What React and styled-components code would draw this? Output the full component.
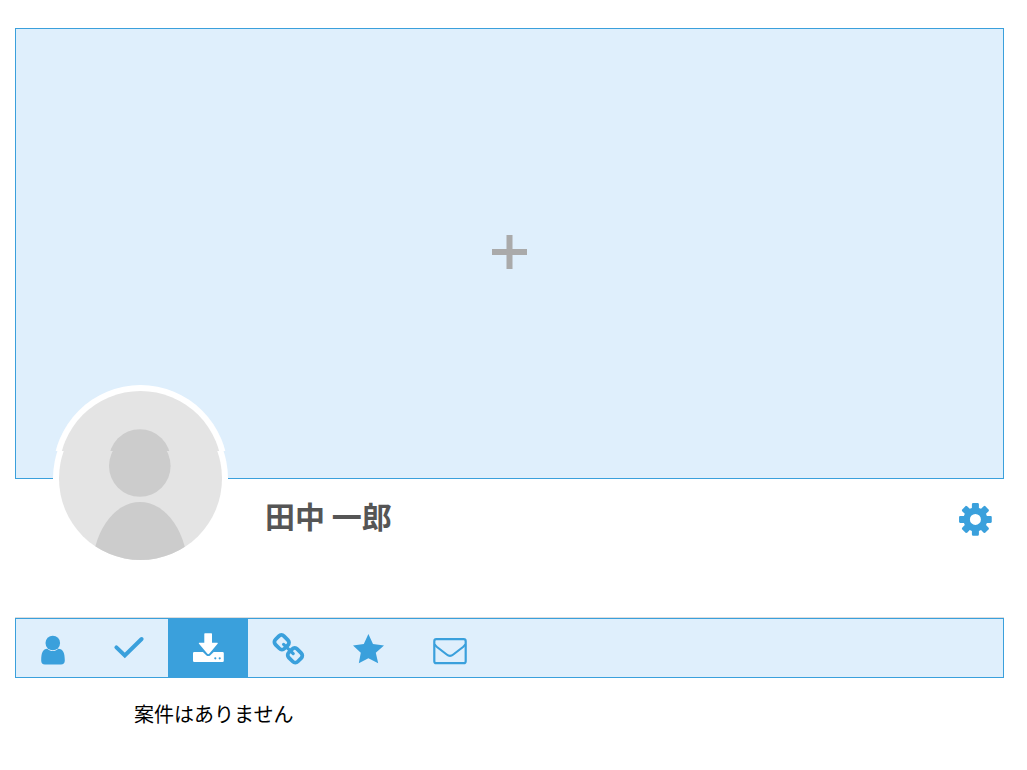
import React, { useState } from "react";
import styled, { createGlobalStyle } from "styled-components";

const BLUE = "#3aa0dc";
const PALE = "#dfeffc";

const GlobalStyle = createGlobalStyle`
  *, *::before, *::after { box-sizing: border-box; }
  body {
    margin: 0;
    background: #fff;
    color: #000;
    font-family: "Noto Sans CJK JP", sans-serif;
  }
`;

const Page = styled.main`
  padding: 28px 23px 32px 15px;
`;

const Cover = styled.button`
  display: flex;
  align-items: center;
  justify-content: center;
  width: 100%;
  height: 451px;
  padding: 0 0 4px;
  border: 1px solid ${BLUE};
  border-radius: 0;
  background: ${PALE};
  color: #aaa;
  cursor: pointer;
`;

const Profile = styled.header`
  display: flex;
  align-items: flex-start;
  height: 139px;
  padding: 0 11px 0 38px;
`;

const Avatar = styled.svg`
  position: relative;
  flex: none;
  display: block;
  margin-top: -94px;
`;

const Name = styled.h1`
  flex: 1;
  margin: 14px 0 0 37px;
  color: #555;
  font-size: 30px;
  line-height: 44px;
  font-weight: 700;
`;

const IconButton = styled.button`
  display: block;
  margin-top: 22px;
  padding: 0;
  border: 0;
  background: none;
  color: ${BLUE};
  cursor: pointer;
`;

const Tabs = styled.nav`
  display: flex;
  height: 60px;
  border: 1px solid ${BLUE};
  background: ${PALE};
  box-shadow: 0 -1px 0 #ddd;
`;

const Tab = styled.button`
  display: flex;
  align-items: center;
  justify-content: center;
  width: ${(p) => (p.$first ? 72 : 80)}px;
  padding: 0;
  border: 0;
  background: ${(p) => (p.$active ? BLUE : "transparent")};
  color: ${(p) => (p.$active ? "#fff" : BLUE)};
  cursor: pointer;
`;

const Message = styled.p`
  margin: 21px 0 0 119px;
  font-size: 20px;
  line-height: 30px;
`;

const Glyph = ({ size = 40, children }) => (
  <svg width={size} height={size} viewBox={`0 0 ${size} ${size}`} fill="currentColor" aria-hidden="true">
    {children}
  </svg>
);

const Portrait = () => (
  <>
    <circle cx="87.5" cy="93.5" r="87.5" fill="#fff" />
    <circle cx="87.5" cy="93.5" r="81.5" fill="#e4e4e4" />
    <circle cx="86.8" cy="81" r="30.8" fill="#cccccc" />
    <ellipse cx="87" cy="187" rx="48" ry="70" fill="#cccccc" clipPath="url(#face)" />
  </>
);

const gearPath = (() => {
  const points = [];
  for (let i = 0; i < 8; i += 1) {
    [[-17, 12], [-13, 15.6], [-10, 16.6], [10, 16.6], [13, 15.6], [17, 12]].forEach(([offset, r]) => {
      const a = ((i * 45 + offset - 90) * Math.PI) / 180;
      points.push(`${(18.4 + r * Math.cos(a)).toFixed(2)} ${(18.4 + r * Math.sin(a)).toFixed(2)}`);
    });
  }
  return `M${points.join("L")}Z M23.9 18.4a5.5 5.5 0 1 0 -11 0a5.5 5.5 0 1 0 11 0Z`;
})();

const TABS = [
  {
    label: "プロフィール",
    icon: (
      <>
        <circle cx="20.8" cy="15" r="7.3" />
        <path d="M15.3 20.7C17 22.3 18.8 23.1 20.8 23.1S24.6 22.3 26.3 20.7C31 20.9 32.8 24.5 32.8 32.5C32.8 35.4 31.4 36.5 29 36.5H13C10.4 36.5 9.2 35.4 9.2 32.5C9.2 24.5 11 20.9 15.3 20.7Z" />
      </>
    ),
  },
  {
    label: "完了",
    icon: <path d="M8.4 19.4L16.8 27.5L33.6 11" fill="none" stroke="currentColor" strokeWidth="4" strokeLinecap="round" />,
  },
  {
    label: "受信",
    icon: (
      <>
        <path d="M16.9 5.3H23.4Q24 5.3 24 5.9V14.7H29.3Q30.3 14.9 29.6 15.8L21.2 25.8Q20.3 26.7 19.4 25.8L11 15.8Q10.3 14.9 11.3 14.7H16.3V5.9Q16.3 5.3 16.9 5.3Z" />
        <path fillRule="evenodd" d="M6.2 24H14.9L18.5 27.4Q20.3 28.8 22.1 27.4L25.7 24H34.5Q35.8 24 35.8 25.3V32.7Q35.8 34 34.5 34H6.2Q5 34 5 32.7V25.3Q5 24 6.2 24ZM26.2 30.3a1.1 1.1 0 1 0 2.2 0a1.1 1.1 0 1 0-2.2 0ZM30.6 30.3a1.1 1.1 0 1 0 2.2 0a1.1 1.1 0 1 0-2.2 0Z" />
      </>
    ),
  },
  {
    label: "リンク",
    icon: (
      <g fill="none" stroke="currentColor" strokeWidth="3.8">
        <rect x="7.3" y="8.3" width="12.8" height="12" rx="3.6" transform="rotate(45 13.7 14.3)" />
        <rect x="20.6" y="21.3" width="12.8" height="12" rx="3.6" transform="rotate(45 27 27.3)" />
        <path d="M15.6 16.4L25.2 25.6" strokeWidth="3.2" strokeLinecap="round" />
      </g>
    ),
  },
  {
    label: "お気に入り",
    icon: <path d="M20.4 6L25 16L36 17.5L27.8 24.8L30.2 35.3L20.4 30.2L10.8 35.3L12.8 24.8L5 17.5L15.8 16Z" />,
  },
  {
    label: "メッセージ",
    icon: (
      <g fill="none" stroke="currentColor" strokeWidth="2.2">
        <rect x="6.3" y="11.2" width="31.4" height="24" rx="2" />
        <path d="M6.6 16.4Q7.4 17.6 9 19L18.7 26.5Q22 29.2 25.3 26.5L35 19Q36.6 17.6 37.4 16.4" />
      </g>
    ),
  },
];

export default function App() {
  const [active, setActive] = useState(2);
  return (
    <>
      <GlobalStyle />
      <Page>
        <Cover type="button" aria-label="カバー画像を追加">
          <svg width="35" height="34" viewBox="0 0 35 34" fill="currentColor" aria-hidden="true">
            <path d="M14.5 0H20.5V14H35V20H20.5V34H14.5V20H0V14H14.5Z" />
          </svg>
        </Cover>
        <Profile>
          <Avatar width="175" height="181" viewBox="0 0 175 181" role="img" aria-label="田中 一郎">
            <defs>
              <clipPath id="upper"><rect width="175" height="66" /></clipPath>
              <clipPath id="lower"><rect y="66" width="175" height="115" /></clipPath>
              <clipPath id="face"><circle cx="87.5" cy="93.5" r="81.5" /></clipPath>
            </defs>
            <g clipPath="url(#upper)"><g transform="translate(0 -6)"><Portrait /></g></g>
            <g clipPath="url(#lower)"><Portrait /></g>
          </Avatar>
          <Name>田中 一郎</Name>
          <IconButton type="button" aria-label="設定">
            <Glyph size={36}><path fillRule="evenodd" d={gearPath} /></Glyph>
          </IconButton>
        </Profile>
        <Tabs aria-label="メニュー">
          {TABS.map((tab, i) => (
            <Tab
              key={tab.label}
              type="button"
              aria-label={tab.label}
              aria-pressed={active === i}
              $first={i === 0}
              $active={active === i}
              onClick={() => setActive(i)}
            >
              <Glyph>{tab.icon}</Glyph>
            </Tab>
          ))}
        </Tabs>
        <Message>案件はありません</Message>
      </Page>
    </>
  );
}
